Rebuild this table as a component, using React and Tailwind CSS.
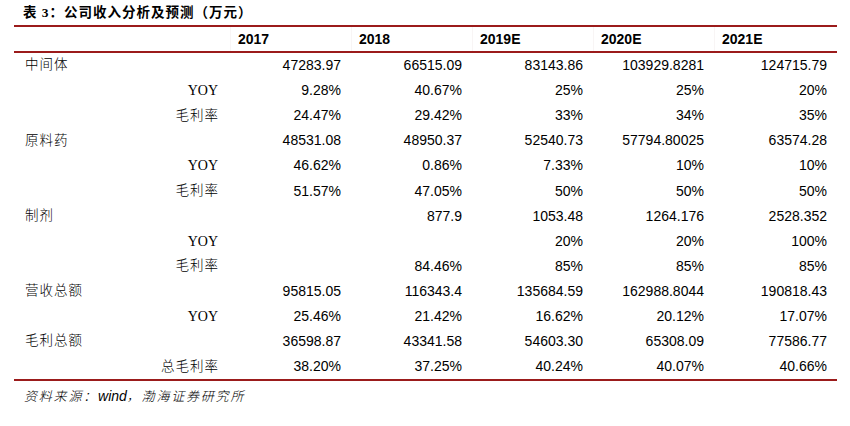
const years = ["2017", "2018", "2019E", "2020E", "2021E"];

const rows = [
  { label: "中间体", main: true, vals: ["47283.97", "66515.09", "83143.86", "103929.8281", "124715.79"] },
  { label: "YOY", vals: ["9.28%", "40.67%", "25%", "25%", "20%"] },
  { label: "毛利率", vals: ["24.47%", "29.42%", "33%", "34%", "35%"] },
  { label: "原料药", main: true, vals: ["48531.08", "48950.37", "52540.73", "57794.80025", "63574.28"] },
  { label: "YOY", vals: ["46.62%", "0.86%", "7.33%", "10%", "10%"] },
  { label: "毛利率", vals: ["51.57%", "47.05%", "50%", "50%", "50%"] },
  { label: "制剂", main: true, vals: ["", "877.9", "1053.48", "1264.176", "2528.352"] },
  { label: "YOY", vals: ["", "", "20%", "20%", "100%"] },
  { label: "毛利率", vals: ["", "84.46%", "85%", "85%", "85%"] },
  { label: "营收总额", main: true, vals: ["95815.05", "116343.4", "135684.59", "162988.8044", "190818.43"] },
  { label: "YOY", vals: ["25.46%", "21.42%", "16.62%", "20.12%", "17.07%"] },
  { label: "毛利总额", main: true, vals: ["36598.87", "43341.58", "54603.30", "65308.09", "77586.77"] },
  { label: "总毛利率", vals: ["38.20%", "37.25%", "40.24%", "40.07%", "40.66%"] },
];

const cols = "grid grid-cols-[216px_121px_121px_121px_121px_123px]";

export default function App() {
  return (
    <div className="w-[850px] h-[426px] bg-white text-black overflow-hidden font-['Liberation_Serif','Noto_Sans_CJK_SC',serif]">
      <div className="pl-[23px] pt-[4px] h-[25px] text-[13.5px] font-bold leading-[18px] tracking-[1px]">
        表 3：公司收入分析及预测（万元）
      </div>
      <div className="ml-[14px] w-[823px]">
        <div className="border-t-2 border-b-2 border-[#9b1b1b]">
          <div className={`${cols} h-[24px] items-center text-[14px] font-bold font-['Liberation_Sans',Arial,sans-serif]`}>
            <div className="h-full"></div>
            {years.map((y) => (
              <div key={y} className="pl-[7px] h-full flex items-center border-l border-[#f8f5f5]">{y}</div>
            ))}
          </div>
        </div>
        <div className="border-b-2 border-[#9b1b1b]">
          {rows.map((r, i) => (
            <div key={i} className={`${cols} h-[25.1px] items-center`}>
              {r.main ? (
                <div className="pl-[11px] text-[13.5px] tracking-[1px] font-light">{r.label}</div>
              ) : r.label === "YOY" ? (
                <div className="pr-[12px] text-right text-[14px]">{r.label}</div>
              ) : (
                <div className="pr-[11px] text-right text-[13.5px] tracking-[1px] font-light">{r.label}</div>
              )}
              {r.vals.map((v, j) => (
                <div key={j} className="pr-[10px] text-right text-[14px] font-['Liberation_Sans',Arial,sans-serif]">{v}</div>
              ))}
            </div>
          ))}
        </div>
      </div>
      <div className="pl-[24px] pt-[5px] text-[13px] italic tracking-[1.8px] font-light">
        资料来源：<span className="font-['Liberation_Sans',Arial,sans-serif] tracking-normal font-normal text-[14px]">wind</span>，渤海证券研究所
      </div>
    </div>
  );
}
